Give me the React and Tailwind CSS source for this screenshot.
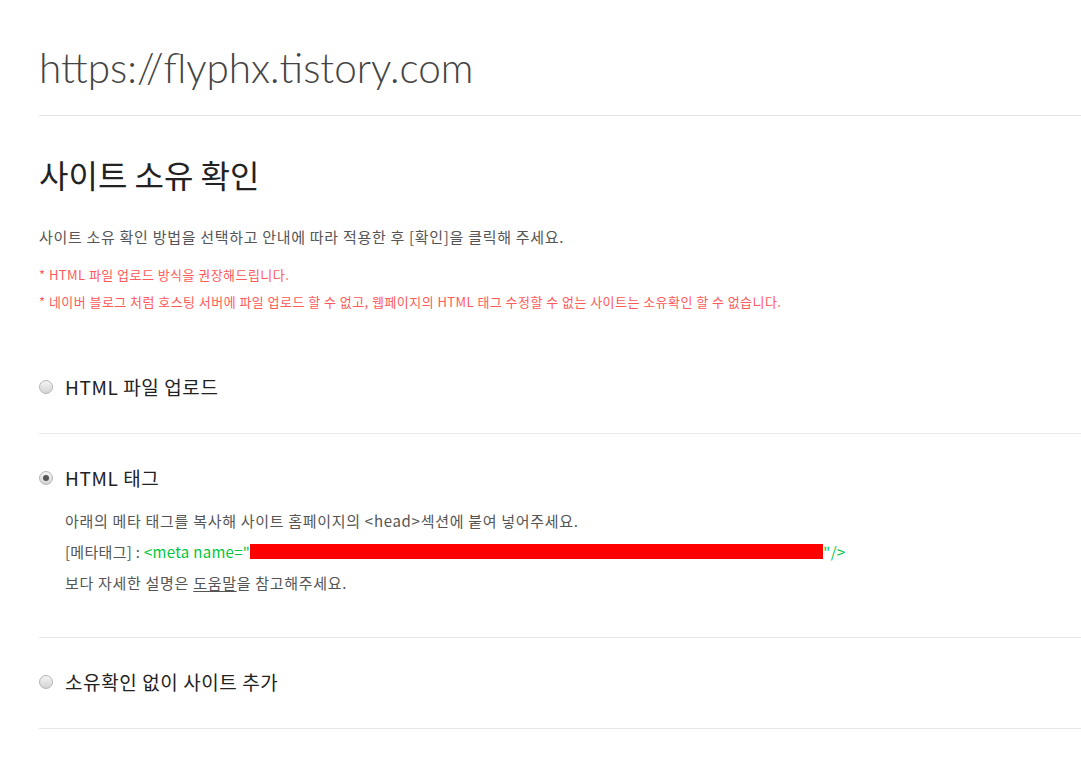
import React from "react";

const Radio = ({ checked }) => (
  <span className="relative inline-flex h-[14px] w-[14px] shrink-0 items-center justify-center rounded-full border border-[#b4b4b4] bg-gradient-to-b from-[#f4f4f4] to-[#d4d4d4]">
    {checked && <span className="h-[6px] w-[6px] rounded-full bg-[#555]" />}
  </span>
);

const Option = ({ label, checked, children }) => (
  <div className="border-b border-[#e8e8e8] pt-[31px] pb-[33px]">
    <div className="flex items-center gap-[12px] text-[19px] leading-[26px] tracking-[0.6px] text-[#222]">
      <Radio checked={checked} />
      <span>{label}</span>
    </div>
    {children}
  </div>
);

export default function App() {
  return (
    <div
      className="min-h-screen bg-white pl-[39px]"
      style={{ fontFamily: '"Noto Sans CJK KR", "Noto Sans", sans-serif' }}
    >
      <div className="border-b border-[#e5e5e5] pt-[40px] pb-[19px]">
        <h1
          className="text-[40.5px] font-light leading-[56px] text-[#444]"
          style={{ fontFamily: 'Lato, "Open Sans", sans-serif' }}
        >
          https://flyphx.tistory.com
        </h1>
      </div>

      <h2 className="mt-[36px] text-[32px] leading-[44px] text-[#222]">사이트 소유 확인</h2>

      <p className="mt-[31px] text-[15px] leading-[20px] tracking-[0.7px] text-[#555]">
        사이트 소유 확인 방법을 선택하고 안내에 따라 적용한 후 [확인]을 클릭해 주세요.
      </p>
      <div className="mt-[14px] text-[13px] leading-[27px] tracking-[0.45px] text-[#ff5a5a]">
        <p>* HTML 파일 업로드 방식을 권장해드립니다.</p>
        <p>* 네이버 블로그 처럼 호스팅 서버에 파일 업로드 할 수 없고, 웹페이지의 HTML 태그 수정할 수 없는 사이트는 소유확인 할 수 없습니다.</p>
      </div>

      <div className="mt-[28px]">
        <Option label="HTML 파일 업로드" />
        <Option label="HTML 태그" checked>
          <div className="mt-[14px] mb-[6px] pl-[26px] text-[15px] leading-[31px] tracking-[0.7px] text-[#555]">
            <p>아래의 메타 태그를 복사해 사이트 홈페이지의 &lt;head&gt;섹션에 붙여 넣어주세요.</p>
            <p className="flex items-center tracking-[0.3px]">
              <span>[메타태그] :&nbsp;</span>
              <span className="text-[#00c73c]">&lt;meta name="</span>
              <span className="inline-block h-[15px] w-[573px] bg-[#ff0000]" />
              <span className="text-[#00c73c]">"/&gt;</span>
            </p>
            <p>
              보다 자세한 설명은 <span className="underline underline-offset-2">도움말</span>을 참고해주세요.
            </p>
          </div>
        </Option>
        <Option label="소유확인 없이 사이트 추가" />
      </div>
    </div>
  );
}
